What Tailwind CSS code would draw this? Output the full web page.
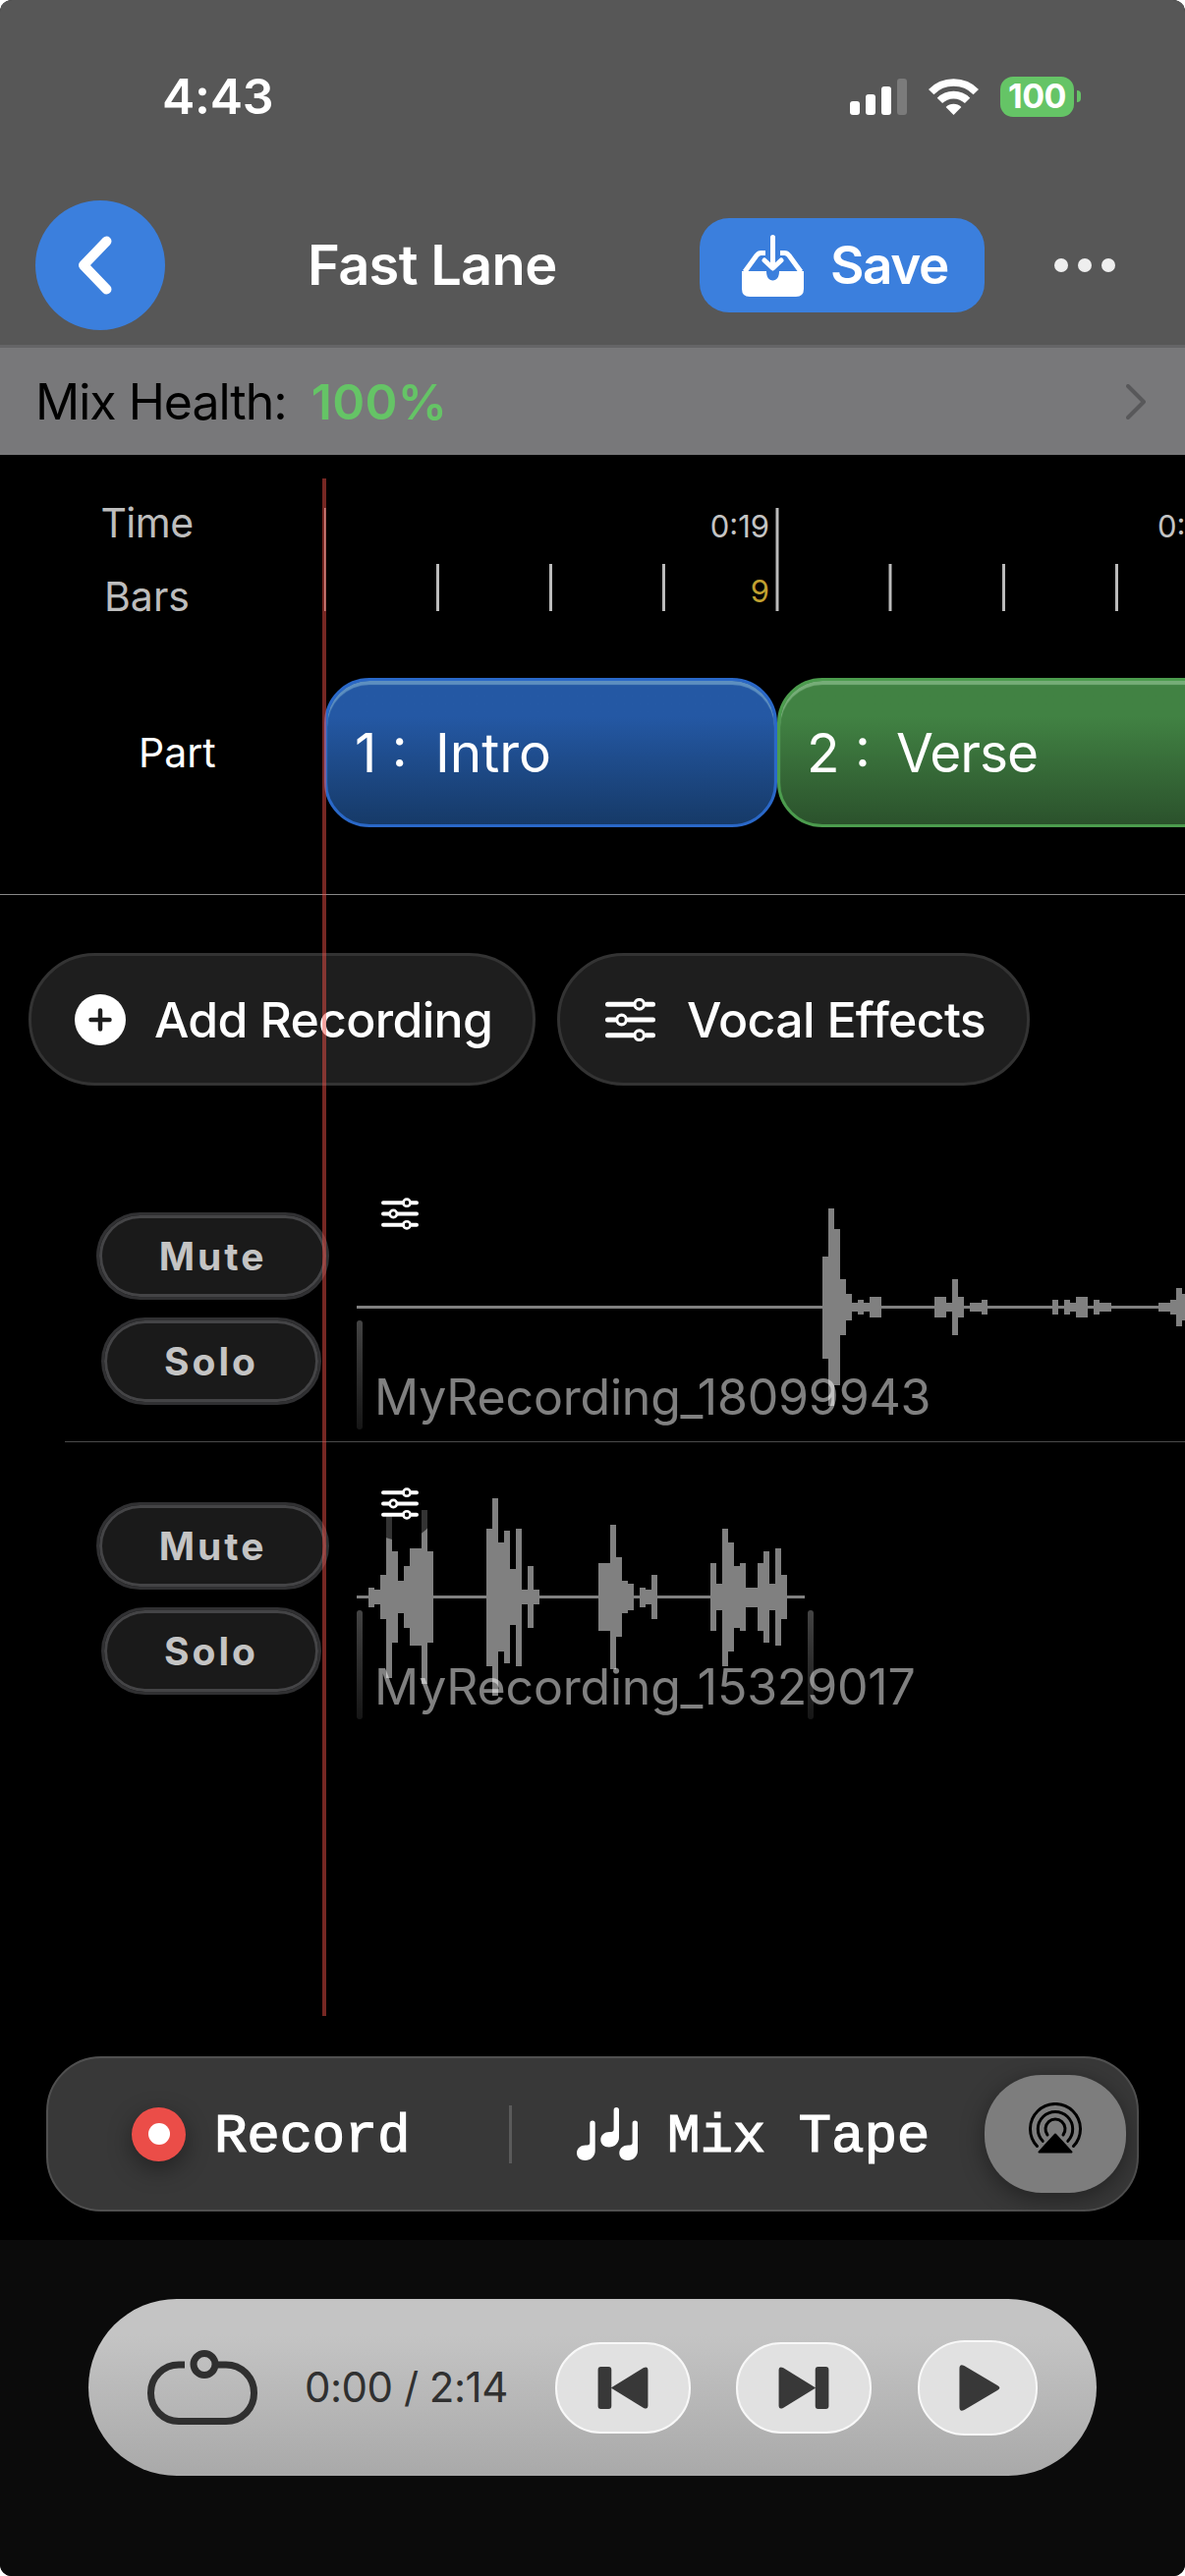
<!DOCTYPE html>
<html lang="en">
<head>
    <meta charset="utf-8">
    <meta name="viewport" content="width=device-width, initial-scale=1">
    <title>Fast Lane</title>
    <script src="https://cdn.jsdelivr.net/npm/@tailwindcss/browser@4"></script>
</head>
<body class="bg-white font-['Inter',sans-serif] leading-none">

<!-- slider icons: the effects button and the smaller one on each track -->
<svg class="hidden">
    <symbol id="sliders" viewBox="0 0 51 44">
        <g fill="none" stroke="currentColor" stroke-linecap="round">
            <path stroke-width="5" d="M2.5 6.3H28M42 6.3H48.5M2.5 22H10M24 22H48.5M2.5 37.7H28M42 37.7H48.5"/>
            <circle cx="34.7" cy="6.3" r="4.8" stroke-width="3.2"/>
            <circle cx="16.6" cy="22" r="4.8" stroke-width="3.2"/>
            <circle cx="34.7" cy="37.7" r="4.8" stroke-width="3.2"/>
        </g>
    </symbol>
    <symbol id="sliders-sm" viewBox="0 0 38 33">
        <g fill="none" stroke="currentColor" stroke-linecap="round">
            <path stroke-width="4" d="M2 5.200H22M31 5.200H36M2 16.500H8M17 16.500H36M2 27.800H22M31 27.800H36"/>
            <circle cx="26" cy="5.200" r="3.600" stroke-width="2.600"/>
            <circle cx="12.300" cy="16.500" r="3.600" stroke-width="2.600"/>
            <circle cx="26" cy="27.800" r="3.600" stroke-width="2.600"/>
        </g>
    </symbol>
</svg>

<div class="relative flex flex-col w-[1206px] h-[2622px] overflow-hidden rounded-[12px] bg-black text-white whitespace-nowrap">

    <header class="h-[354px] bg-[#575757] border-b-3 border-[#656567]">
        <!-- status bar -->
        <div class="flex items-center h-[196px] pl-[165px] pr-[106px]">
            <div class="text-[50px] font-semibold tracking-[-0.3px]">4:43</div>
            <svg class="ml-auto" width="58" height="37" viewBox="0 0 58 37" fill="#fff">
                <rect x="0" y="23" width="10" height="14" rx="3"/>
                <rect x="16" y="16" width="10" height="21" rx="3"/>
                <rect x="32" y="8" width="10" height="29" rx="3"/>
                <rect x="48" y="0" width="10" height="37" rx="3" fill="#7b7b7b"/>
            </svg>
            <svg class="ml-[22px]" width="51" height="37" viewBox="0 0 51 37" fill="none" stroke="#fff">
                <path stroke-width="7.6" d="M2.7 13.6A32 32 0 0 1 48.3 13.6"/>
                <path stroke-width="7.6" d="M11.4 22.4A20 20 0 0 1 39.6 22.4"/>
                <path fill="#fff" stroke="none" d="M25.5 37L17.6 28.9A11.5 11.5 0 0 1 33.4 28.9Z"/>
            </svg>
            <div class="flex items-center justify-center ml-[22px] w-[75px] h-[41px] rounded-[13px] bg-[#65c466] text-[34px] font-bold tracking-[-0.5px]">100</div>
            <div class="ml-[3px] w-[4px] h-[12px] rounded-r-full bg-[#65c466]"></div>
        </div>

        <!-- navigation bar -->
        <div class="flex items-center h-[148px] pl-[36px] pr-[71px]">
            <div class="flex items-center justify-center size-[132px] rounded-full bg-[#3b7fdd]">
                <svg class="mr-[11px]" width="35" height="60" viewBox="0 0 35 60" fill="none" stroke="#fff" stroke-width="10" stroke-linecap="round" stroke-linejoin="round">
                    <path d="M29.5 5.5L6 30L29.5 54.5"/>
                </svg>
            </div>
            <h1 class="ml-[145px] w-[399px] text-[56px] font-semibold tracking-[-0.7px]">Fast Lane</h1>
            <div class="flex items-center w-[290px] h-[96px] pl-[43px] rounded-[30px] bg-[#3b7fdd]">
                <svg width="63" height="63" viewBox="0 0 63 63" fill="none">
                    <path fill="#fff" d="M0 37H25C25 43 27.500 46.500 31.500 46.500S38 43 38 37H63V55Q63 63 55 63H8Q0 63 0 55Z"/>
                    <path stroke="#fff" stroke-width="5" stroke-linejoin="round" d="M24 18.500H19.500Q17 18.500 15 21L3 37.500M39 18.500H43.500Q46 18.500 48 21L60 37.500"/>
                    <path stroke="#fff" stroke-width="5" stroke-linecap="round" stroke-linejoin="round" d="M31.500 2.500V32M23 26L31.500 34L40 26"/>
                </svg>
                <span class="ml-[27px] text-[53px] font-semibold tracking-[-1.4px]">Save</span>
            </div>
            <div class="flex gap-[10px] ml-auto">
                <i class="size-[14px] rounded-full bg-[#eee]"></i>
                <i class="size-[14px] rounded-full bg-[#eee]"></i>
                <i class="size-[14px] rounded-full bg-[#eee]"></i>
            </div>
        </div>
    </header>

    <div class="flex items-center h-[109px] pl-[36px] pr-[40px] bg-[#78787a] text-[50px]">
        <span class="text-black tracking-[-1px]">Mix Health:</span>
        <span class="ml-[25px] font-semibold tracking-[0.3px] text-[#65c466]">100%</span>
        <svg class="ml-auto" width="20" height="36" viewBox="0 0 20 36" fill="none" stroke="#58585a" stroke-width="4" stroke-linecap="round" stroke-linejoin="round">
            <path d="M2 2L18 18L2 34"/>
        </svg>
    </div>

    <!-- timeline -->
    <section class="h-[448px] border-b border-[#888]">
        <div class="flex h-[226px]">
            <div class="w-[330px] pt-[49px] pr-[31px] text-center text-[41px] text-[#bdbdbd]">
                <div class="tracking-[-0.5px]">Time</div>
                <div class="mt-[34px]">Bars</div>
            </div>
            <svg width="876" height="226" viewBox="330 463 876 226">
                <g fill="#bbb">
                    <rect x="329.500" y="517" width="2" height="105"/>
                    <rect x="444" y="574" width="3" height="48"/>
                    <rect x="559" y="574" width="3" height="48"/>
                    <rect x="674" y="574" width="3" height="48"/>
                    <rect x="789.500" y="517" width="3" height="105"/>
                    <rect x="904.500" y="574" width="3" height="48"/>
                    <rect x="1020" y="574" width="3" height="48"/>
                    <rect x="1135" y="574" width="3" height="48"/>
                </g>
                <g class="text-[31px]" fill="#c4c4c4">
                    <text x="783" y="546.500" text-anchor="end">0:19</text>
                    <text x="783" y="612.500" text-anchor="end" fill="#c0a030">9</text>
                    <text x="1178" y="546.500">0:</text>
                </g>
            </svg>
        </div>
        <div class="flex items-center h-[154px]">
            <div class="shrink-0 w-[330px] pl-[141px] text-[41px]">Part</div>
            <div class="flex shrink-0 items-center w-[461px] h-[152px] pl-[28px] rounded-[46px] border-3 border-[#2a68c8] bg-linear-to-b from-[#2458a4] from-25% to-[#163a68] text-[55px] shadow-[inset_0_4px_1px_#5d8fc0]">
                <span class="w-[82px]">1 :</span><span>Intro</span>
            </div>
            <div class="flex shrink-0 items-center w-[461px] h-[152px] pl-[27px] rounded-[46px] border-3 border-[#4c9c4e] bg-linear-to-b from-[#418243] from-25% to-[#2b522c] text-[55px] shadow-[inset_0_4px_1px_#76ad78]">
                <span class="w-[91px]">2 :</span><span class="tracking-[-1px]">Verse</span>
            </div>
        </div>
    </section>

    <div class="flex gap-[22px] h-[262px] pt-[59px] pl-[29px] text-[50px] font-medium">
        <div class="flex items-center w-[516px] h-[135px] pl-[44px] rounded-full border-3 border-[#333] bg-[#1e1e1e]">
            <svg width="52" height="52" viewBox="0 0 52 52">
                <circle cx="26" cy="26" r="26" fill="#fff"/>
                <path d="M26 16.500V35.500M16.500 26H35.500" stroke="#1e1e1e" stroke-width="4.500" stroke-linecap="round"/>
            </svg>
            <span class="ml-[29px] tracking-[-0.7px]">Add Recording</span>
        </div>
        <div class="flex items-center w-[481px] h-[135px] pl-[46px] rounded-full border-3 border-[#333] bg-[#1e1e1e]">
            <svg width="51" height="44"><use href="#sliders"/></svg>
            <span class="ml-[32px] tracking-[-0.7px]">Vocal Effects</span>
        </div>
    </div>

    <!-- tracks -->
    <div class="flex h-[295px] ml-[66px] border-b border-[#4a4a4a]">
        <div class="flex flex-col items-center gap-[18px] shrink-0 w-[297px] pt-[61px] pl-[4px] text-[39px] font-bold tracking-[3px] text-[#c4c4c4]">
            <div class="flex items-center justify-center w-[237px] h-[89px] rounded-full border-3 border-[#303032] bg-[#1a1a1a] shadow-[inset_0_0_0_3px_#444446]">Mute</div>
            <div class="flex items-center justify-center mr-[3px] w-[224px] h-[89px] rounded-full border-3 border-[#303032] bg-[#1a1a1a] shadow-[inset_0_0_0_3px_#444446]">Solo</div>
        </div>
        <div class="relative w-[843px] overflow-hidden pt-[57px]">
            <div id="wave-1" class="flex items-center h-[201px]"></div>
            <div class="absolute left-0 top-[171px] w-[6px] h-[111px] rounded-full bg-linear-to-b from-[#444] to-[#161616]"></div>
            <div class="absolute left-[6px] top-[24px] flex items-center justify-center size-[76px] rounded-full bg-black/60">
                <svg width="38" height="33"><use href="#sliders-sm"/></svg>
            </div>
            <div class="absolute left-[18px] top-[224px] text-[50px] tracking-[-0.2px] text-white/50">MyRecording_18099943</div>
        </div>
    </div>
    <div class="flex h-[295px] ml-[66px]">
        <div class="flex flex-col items-center gap-[18px] shrink-0 w-[297px] pt-[61px] pl-[4px] text-[39px] font-bold tracking-[3px] text-[#c4c4c4]">
            <div class="flex items-center justify-center w-[237px] h-[89px] rounded-full border-3 border-[#303032] bg-[#1a1a1a] shadow-[inset_0_0_0_3px_#444446]">Mute</div>
            <div class="flex items-center justify-center mr-[3px] w-[224px] h-[89px] rounded-full border-3 border-[#303032] bg-[#1a1a1a] shadow-[inset_0_0_0_3px_#444446]">Solo</div>
        </div>
        <div class="relative w-[843px] overflow-hidden pt-[57px]">
            <div id="wave-2" class="flex items-center h-[201px]"></div>
            <div class="absolute left-0 top-[171px] w-[6px] h-[111px] rounded-full bg-linear-to-b from-[#444] to-[#161616]"></div>
            <div class="absolute left-[459px] top-[171px] w-[6px] h-[111px] rounded-full bg-linear-to-b from-[#444] to-[#161616]"></div>
            <div class="absolute left-[6px] top-[24px] flex items-center justify-center size-[76px] rounded-full bg-black/60">
                <svg width="38" height="33"><use href="#sliders-sm"/></svg>
            </div>
            <div class="absolute left-[18px] top-[224px] text-[50px] tracking-[-0.2px] text-white/50">MyRecording_15329017</div>
        </div>
    </div>

    <!-- playhead -->
    <div class="absolute left-[328px] top-[487px] w-[4px] h-[1565px] bg-[#eb4e46]/50"></div>

    <!-- record / mix tape -->
    <div class="flex items-center w-[1112px] h-[158px] mt-[330px] ml-[47px] pl-[85px] pr-[11px] rounded-[56px] border-2 border-[#505050] bg-[#383838] font-['Liberation_Mono',monospace] text-[56px]">
        <div class="flex items-center justify-center size-[55px] rounded-full bg-[#eb4d48] shadow-[0_8px_24px_#0006]">
            <i class="size-[22px] rounded-full bg-white"></i>
        </div>
        <span class="ml-[29px] pt-[5px] w-[201px] tracking-[-0.4px] [-webkit-text-stroke:1.2px_white]">Record</span>
        <div class="ml-[99px] w-[3px] h-[59px] bg-[#5a5a5a]"></div>
        <svg class="ml-[66px]" width="62" height="54" viewBox="0 0 62 54" fill="#fff">
            <path id="note" d="M13.300 16.200a2.700 2.700 0 0 1 5.400 0V44C18.700 50 14 54 8.500 54C3.500 54 0 51 0 46.500C0 41.500 4 38.500 9 38.500C12 38.500 13.300 38 13.300 36Z"/>
            <use href="#note" x="24.300" y="-13.500"/>
            <use href="#note" x="43.300"/>
        </svg>
        <span class="ml-[30px] pt-[5px] tracking-[-0.2px] [-webkit-text-stroke:1.2px_white]">Mix Tape</span>
        <div class="flex items-center justify-center ml-auto w-[144px] h-[120px] rounded-[58px] bg-[#7d7d7d] shadow-[0_6px_24px_#0006]">
            <svg class="mb-[10px]" width="54" height="54" viewBox="0 0 54 54" fill="none" stroke="#000" stroke-width="3" stroke-linecap="round">
                <path d="M8.500 44.500A25.500 25.500 0 1 1 45.500 44.500"/>
                <path d="M14.200 39.300A17.700 17.700 0 1 1 39.800 39.300"/>
                <path d="M19 33A10 10 0 1 1 35 33"/>
                <path fill="#000" stroke-linejoin="round" stroke-width="2" d="M27 32.500L43.500 50.500H10.500Z"/>
            </svg>
        </div>
    </div>

    <!-- transport -->
    <footer class="flex-1 mt-[29px] pt-[60px] pl-[90px] bg-[#0b0b0b]">
        <div class="flex items-center w-[1026px] h-[180px] pl-[60px] pr-[60px] rounded-full bg-linear-to-b from-[#c4c4c4] from-20% to-[#a9a9a9] text-[#303030]">
            <svg width="112" height="76" viewBox="0 0 112 76" fill="none" stroke="#2f2f2f" stroke-width="7">
                <path d="M38 15H32A28.500 28.500 0 0 0 3.500 43.500V44A28.500 28.500 0 0 0 32 72.500H80A28.500 28.500 0 0 0 108.500 44V43.500A28.500 28.500 0 0 0 80 15H70"/>
                <circle cx="58" cy="14.500" r="11"/>
            </svg>
            <span class="ml-[48px] w-[255px] text-[42px] tracking-[-0.5px]">0:00 / 2:14</span>
            <div class="flex items-center justify-center w-[138px] h-[93px] rounded-[46px] border-2 border-[#f8f8f8] bg-[#e1e1e1]">
                <svg width="52" height="43" viewBox="0 0 52 44" fill="#383838">
                    <rect width="14" height="44" rx="3"/>
                    <path d="M13.500 22L47.500 1Q52 -1 52 3.500V40.500Q52 45 47.500 43Z"/>
                </svg>
            </div>
            <div class="flex items-center justify-center ml-[46px] w-[138px] h-[93px] rounded-[46px] border-2 border-[#f8f8f8] bg-[#e1e1e1]">
                <svg class="-scale-x-100" width="52" height="43" viewBox="0 0 52 44" fill="#383838">
                    <rect width="14" height="44" rx="3"/>
                    <path d="M13.500 22L47.500 1Q52 -1 52 3.500V40.500Q52 45 47.500 43Z"/>
                </svg>
            </div>
            <div class="flex items-center justify-center ml-auto w-[122px] h-[97px] rounded-[48px] border-2 border-[#f8f8f8] bg-[#e1e1e1]">
                <svg class="ml-[4px]" width="42" height="47" viewBox="0 0 42 48" fill="#383838">
                    <path d="M0 4Q0 -1.500 5 1L39.500 21.500Q44 24 39.500 26.500L5 47Q0 49.500 0 44Z"/>
                </svg>
            </div>
        </div>
    </footer>
</div>

<script>
    // bar heights in px, keyed by the index where each run starts; the rest is silence
    const waves = {
        'wave-1': {
            count: 141,
            runs: {
                79: [104, 201, 159, 57, 27, 9, 15, 9, 21, 21],
                98: [21, 21, 9, 57, 21],
                104: [9, 9, 15],
                118: [15],
                120: [15, 9, 21, 21],
                125: [15, 9, 9],
                136: [9, 9, 15, 39, 27],
            },
        },
        'wave-2': {
            count: 76,
            runs: {
                2: [20, 15, 45, 165, 93, 33, 63, 99, 99, 177, 93],
                22: [140, 201, 111, 135, 57, 140, 15, 63, 15],
                41: [69, 69, 147, 81, 33, 27],
                48: [20, 15, 45],
                60: [69, 27, 140, 111, 63, 69, 20, 20, 69, 93, 27, 99, 45],
            },
        },
    };

    for (const [id, { count, runs }] of Object.entries(waves)) {
        const heights = Array(count).fill(3);
        for (const [start, run] of Object.entries(runs)) {
            run.forEach((h, i) => heights[+start + i] = h);
        }
        document.getElementById(id).innerHTML = heights
            .map(h => `<i class="shrink-0 w-[6px] bg-[#808080]" style="height:${h}px"></i>`)
            .join('');
    }
</script>
</body>
</html>
